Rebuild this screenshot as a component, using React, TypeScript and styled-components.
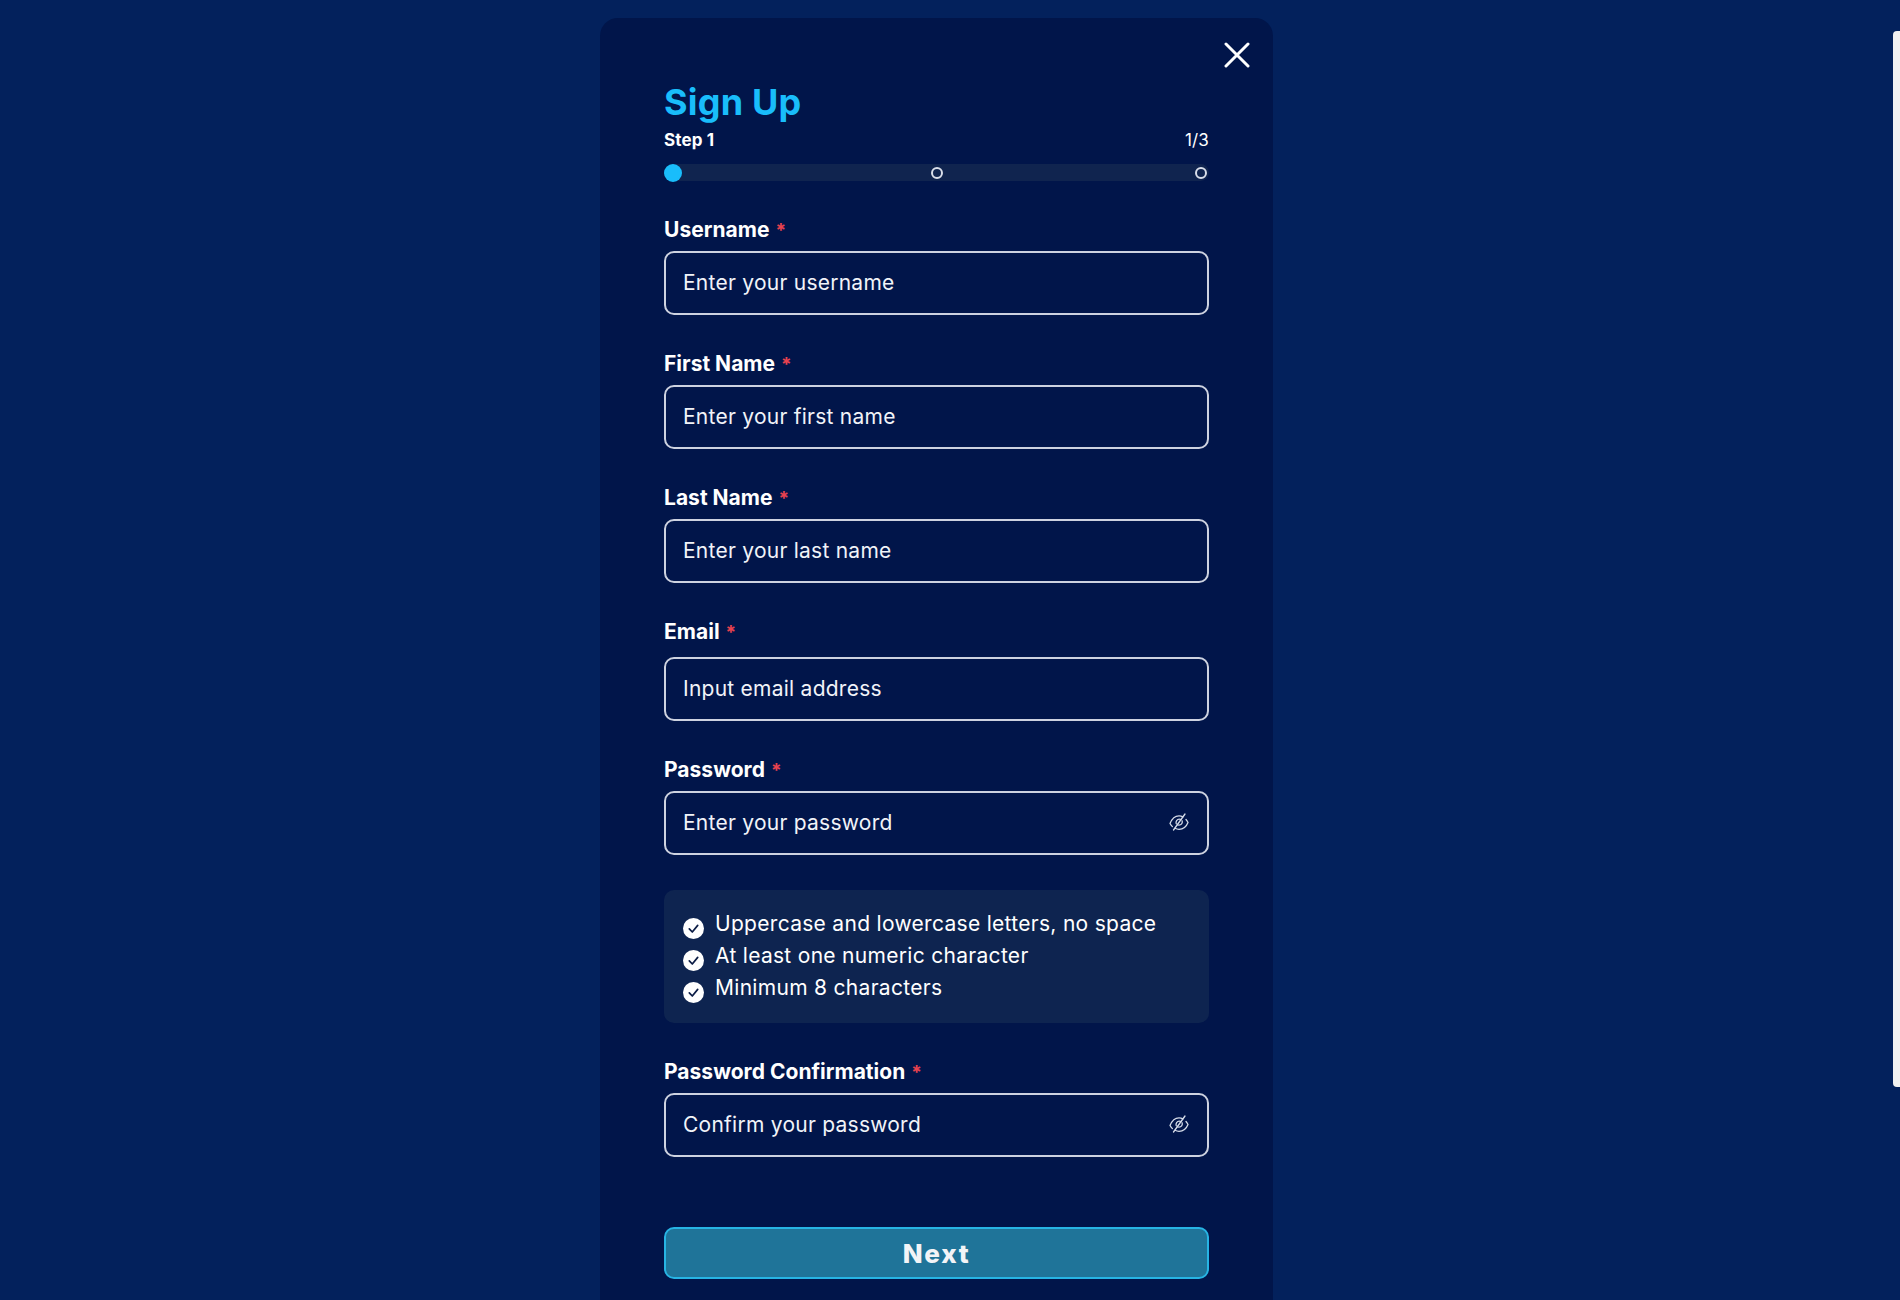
import React from "react";
import styled, { createGlobalStyle } from "styled-components";

const Global = createGlobalStyle`
  html, body { margin: 0; padding: 0; height: 100%; overflow: hidden; background: #03215c; }
  * { box-sizing: border-box; }
  body { font-family: Inter, "Liberation Sans", sans-serif; color: #fff; }
`;

const Page = styled.div`
  position: relative;
  height: 1300px;
  overflow: hidden;
  background: #03215c;
  display: flex;
  justify-content: center;
  padding: 18px 27px 0 0;
`;

const Scrollbar = styled.div`
  position: absolute;
  top: 31px;
  right: 0;
  width: 7px;
  height: 1056px;
  background: #f2f2f2;
  border-radius: 4px 0 0 4px;
`;

const Modal = styled.main`
  position: relative;
  width: 673px;
  height: 1400px;
  flex: none;
  background: #01154a;
  border-radius: 18px 18px 0 0;
  padding: 61px 64px 0;
`;

const Close = styled.button`
  position: absolute;
  top: 24px;
  right: 23px;
  width: 26px;
  height: 26px;
  padding: 0;
  border: 0;
  background: none;
  color: #fff;
`;

const Title = styled.h1`
  margin: 0;
  height: 46px;
  font-size: 36px;
  line-height: 46px;
  font-weight: 700;
  letter-spacing: 0.2px;
  color: #19bdfb;
`;

const StepRow = styled.div`
  display: flex;
  justify-content: space-between;
  align-items: center;
  height: 26px;
  margin-top: 2px;
  font-size: 17px;
  letter-spacing: 0.15px;
`;

const StepName = styled.span`
  font-weight: 700;
`;

const StepCount = styled.span`
  font-weight: 400;
`;

const Track = styled.div`
  display: flex;
  justify-content: space-between;
  align-items: center;
  height: 17px;
  margin-top: 11px;
  margin-bottom: 34px;
  padding-right: 2px;
  background: #10244f;
  border-radius: 9px;
`;

const Dot = styled.span<{ $active?: boolean }>`
  flex: none;
  width: ${(p) => (p.$active ? 18 : 12)}px;
  height: ${(p) => (p.$active ? 18 : 12)}px;
  margin-right: ${(p) => (p.$active ? -3 : 0)}px;
  border-radius: 50%;
  background: ${(p) => (p.$active ? "#19bdfb" : "transparent")};
  border: ${(p) => (p.$active ? "none" : "2px solid #d9deea")};
`;

const Field = styled.div<{ $after?: number }>`
  margin-bottom: ${(p) => p.$after ?? 34}px;
`;

const Label = styled.label<{ $gap?: number }>`
  display: block;
  height: 30px;
  margin-bottom: ${(p) => p.$gap ?? 6}px;
  font-size: 21px;
  line-height: 30px;
  font-weight: 700;
  letter-spacing: 0.02px;
`;

const Star = styled.span`
  color: #e8424f;
  margin-left: 6px;
  font-size: 19px;
`;

const InputBox = styled.div`
  display: flex;
  align-items: center;
  justify-content: space-between;
  height: 64px;
  padding: 0 18px 2px 17px;
  border: 2px solid #cdd2e0;
  border-radius: 10px;
  font-size: 21px;
  letter-spacing: 0.25px;
  font-weight: 400;
  color: #f1f3f8;
`;

const Checklist = styled.ul`
  list-style: none;
  margin: 0 0 34px;
  padding: 18px 18px 0 19px;
  height: 133px;
  background: #0e2450;
  border-radius: 10px;
`;

const CheckItem = styled.li`
  display: flex;
  align-items: flex-start;
  gap: 11px;
  height: 32px;
  font-size: 21px;
  line-height: 32px;
  letter-spacing: 0.3px;
`;

const CheckIcon = styled.svg`
  flex: none;
  width: 21px;
  height: 21px;
  margin-top: 10px;
`;

const Next = styled.button`
  display: block;
  width: 100%;
  height: 52px;
  margin-top: 70px;
  border: 2px solid #27b4e4;
  border-radius: 10px;
  background: #1f7499;
  color: #f2f4f7;
  font-family: inherit;
  font-size: 26px;
  font-weight: 800;
  letter-spacing: 1.7px;
`;

const EyeOff = () => (
  <svg width="20" height="20" viewBox="0 0 20 20" fill="none" stroke="#d5dbe8" strokeWidth="1.3" strokeLinecap="round">
    <path d="M1 11.500C3 6.500 6.300 3.800 10 3.800c1.400 0 2.700.4 3.900 1.100M17 7.500c.9 1 1.500 2 2 3-2 5-5.300 6.800-9 6.800-1.400 0-2.700-.3-3.900-1M3.400 14.600C2.500 13.700 1.700 12.700 1 11.500" />
    <path d="M7.200 11.600C6.500 9.400 8 7.200 10.300 7.200c.7 0 1.300.2 1.800.5M13.200 9c.5 2.300-1 4.200-3.200 4.200-.6 0-1.200-.1-1.700-.4" />
    <path d="M16 2 4.500 18" />
  </svg>
);

const Check = () => (
  <CheckIcon viewBox="0 0 21 21">
    <circle cx="10.500" cy="10.500" r="10.500" fill="#fff" />
    <path d="M6.300 10.800l3 3.200 5.400-6.600" fill="none" stroke="#0b1c45" strokeWidth="1.700" strokeLinecap="round" strokeLinejoin="round" />
  </CheckIcon>
);

const fields = [
  { label: "Username", placeholder: "Enter your username" },
  { label: "First Name", placeholder: "Enter your first name" },
  { label: "Last Name", placeholder: "Enter your last name" },
  { label: "Email", placeholder: "Input email address", labelGap: 10 },
  { label: "Password", placeholder: "Enter your password", eye: true, after: 35 },
];

const rules = [
  "Uppercase and lowercase letters, no space",
  "At least one numeric character",
  "Minimum 8 characters",
];

export default function App() {
  return (
    <>
      <Global />
      <Page>
        <Modal>
          <Close aria-label="Close">
            <svg width="26" height="26" viewBox="0 0 26 26" fill="none" stroke="currentColor" strokeWidth="3" strokeLinecap="round">
              <path d="M2 2 24 24M24 2 2 24" />
            </svg>
          </Close>
          <Title>Sign Up</Title>
          <StepRow>
            <StepName>Step 1</StepName>
            <StepCount>1/3</StepCount>
          </StepRow>
          <Track>
            <Dot $active />
            <Dot />
            <Dot />
          </Track>
          {fields.map((f) => (
            <Field key={f.label} $after={f.after}>
              <Label $gap={f.labelGap}>
                {f.label}
                <Star>*</Star>
              </Label>
              <InputBox>
                {f.placeholder}
                {f.eye && <EyeOff />}
              </InputBox>
            </Field>
          ))}
          <Checklist>
            {rules.map((r) => (
              <CheckItem key={r}>
                <Check />
                {r}
              </CheckItem>
            ))}
          </Checklist>
          <Field>
            <Label>
              Password Confirmation
              <Star>*</Star>
            </Label>
            <InputBox>
              Confirm your password
              <EyeOff />
            </InputBox>
          </Field>
          <Next>Next</Next>
        </Modal>
        <Scrollbar />
      </Page>
    </>
  );
}
